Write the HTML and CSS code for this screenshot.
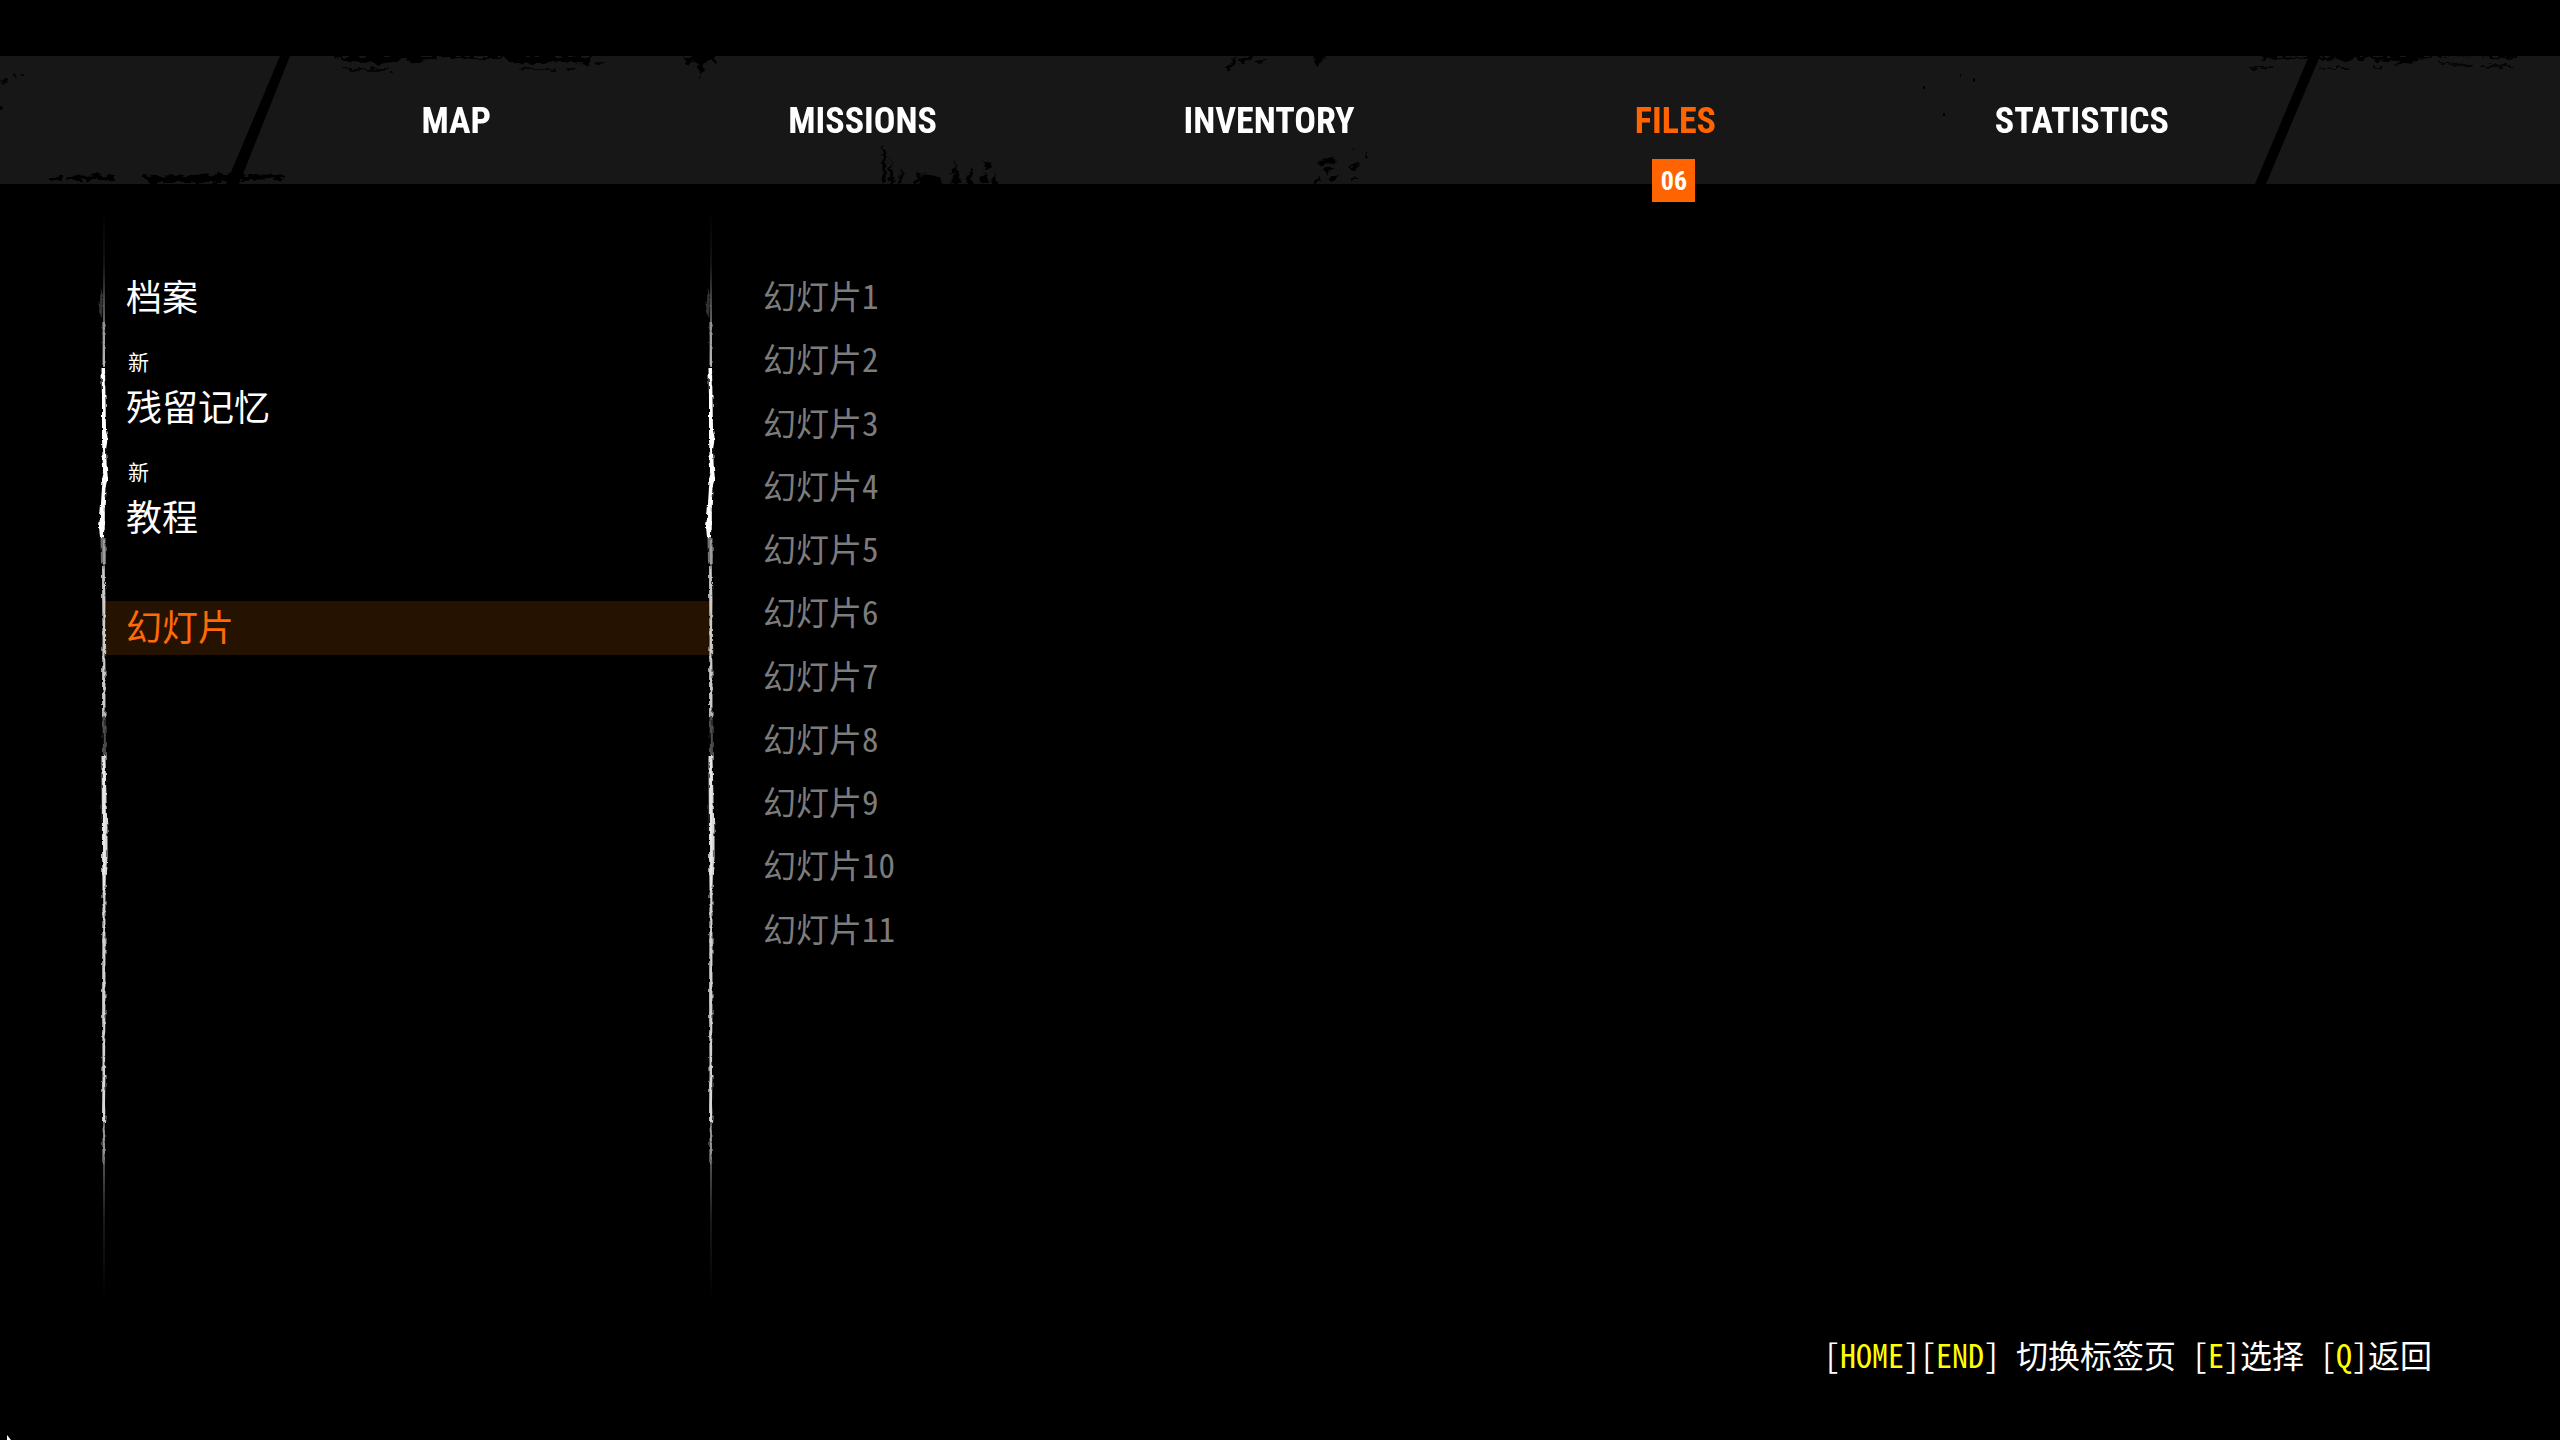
FILE: index.html
```
<!DOCTYPE html>
<html lang="zh-CN">
<head>
  <meta charset="UTF-8">
  <meta name="viewport" content="width=device-width, initial-scale=1.0">
  <title>Files</title>
  <link rel="stylesheet" href="styles.css">
</head>
<body>

<!-- shared shapes -->
<svg class="defs" aria-hidden="true">
  <defs>
    <filter id="rough" x="-50%" y="-5%" width="200%" height="110%">
      <feTurbulence type="fractalNoise" baseFrequency="0.3 0.15" numOctaves="2" seed="4" result="n"/>
      <feDisplacementMap in="SourceGraphic" in2="n" scale="4" xChannelSelector="R" yChannelSelector="G"/>
    </filter>
    <filter id="blot" x="-10%" y="-30%" width="120%" height="160%">
      <feTurbulence type="fractalNoise" baseFrequency="0.12 0.2" numOctaves="2" seed="9" result="n"/>
      <feDisplacementMap in="SourceGraphic" in2="n" scale="9" xChannelSelector="R" yChannelSelector="G"/>
    </filter>
    <linearGradient id="fadeTop" x1="0" y1="0" x2="0" y2="1">
      <stop offset="0" stop-color="#fff" stop-opacity="0"/>
      <stop offset="0.35" stop-color="#fff" stop-opacity="0.08"/>
      <stop offset="0.6" stop-color="#fff" stop-opacity="0.3"/>
      <stop offset="1" stop-color="#fff" stop-opacity="0.6"/>
    </linearGradient>
    <linearGradient id="fadeBottom" x1="0" y1="0" x2="0" y2="1">
      <stop offset="0" stop-color="#fff" stop-opacity="0.4"/>
      <stop offset="0.5" stop-color="#fff" stop-opacity="0.1"/>
      <stop offset="1" stop-color="#fff" stop-opacity="0"/>
    </linearGradient>
    <symbol id="edge" viewBox="0 0 24 1120">
      <rect x="11" y="10" width="2" height="157" fill="url(#fadeTop)"/>
      <rect x="11" y="940" width="2" height="160" fill="url(#fadeBottom)"/>
      <g filter="url(#rough)" fill="#fff">
        <path opacity="0.2" d="M9 88 L11 96 L10 118 L7 112 Z"/>
        <path opacity="0.3" d="M10.500 122 L13 122 L13 166 L10 166 Z"/>
        <path d="M9.500 168 L13 168 L14 230 L15.500 238 L14 250 L15 270 L16 278 L13.500 288 L12.500 310 L12 338 L8 338 L7 326 L8.500 310 L10 288 L11 270 L10 240 L10 200 Z"/>
        <path opacity="0.45" d="M8.500 338 L13.500 338 L14 364 L9 362 Z"/>
        <path opacity="0.7" d="M10 366 L12.500 366 L13.500 400 L13 440 L13.500 470 L13.500 516 L10 516 L10 480 L10.500 440 L10 390 Z"/>
        <path opacity="0.3" d="M10.500 516 L13.500 516 L14 556 L11 556 Z"/>
        <path opacity="0.85" d="M9.500 556 L13.500 556 L14.500 600 L15.500 630 L15.500 658 L14 670 L13.500 690 L10.500 690 L10 640 Z"/>
        <path opacity="0.7" d="M10.500 690 L13.500 690 L13.500 760 L13.500 800 L13 874 L10.500 874 L10 800 Z"/>
        <path opacity="0.75" d="M10.500 874 L13.500 874 L13 904 L13.500 916 L13 922 L10 922 L10 908 Z"/>
        <path opacity="0.35" d="M10.500 926 L12.500 926 L13 952 L12 966 L10 960 Z"/>
      </g>
      <rect x="11" y="170" width="2" height="160" fill="#fff" opacity="0.7"/>
      <rect x="11" y="340" width="2" height="170" fill="#fff" opacity="0.3"/>
      <rect x="11" y="560" width="2" height="380" fill="#fff" opacity="0.4"/>
    </symbol>
  </defs>
</svg>

<header class="topbar">
  <svg class="topbar-art" viewBox="0 0 2560 128" preserveAspectRatio="none" aria-hidden="true">
    <polygon points="280,0 290,0 239,128 226,128"/>
    <polygon points="2309,0 2320,0 2266,128 2255,128"/>
    <g filter="url(#blot)">
      <path d="M335 0 L425 0 L510 0 L592 0 L588 8 L560 5 L540 8 L512 7 L505 2 L430 2 L420 6 L400 4 L380 8 L350 6 Z"/>
      <path opacity="0.7" d="M342 12 H390 V15 H342 Z M518 12 H555 V14 H518 Z M565 12 H575 V14 H565 Z M596 6 H604 V8 H596 Z"/>
      <path d="M684 0 H716 L714 10 L710 4 L704 8 L701 22 L697 8 L692 4 L688 8 Z"/>
      <path opacity="0.8" d="M0 26 L6 22 L8 24 L2 29 Z M12 20 L15 17 L16 22 Z M20 18 L25 17 L23 21 Z M0 50 L2 50 V54 H0 Z"/>
      <path d="M50 120 H62 V124 H50 Z M66 120 L114 119 V124 H68 Z M142 120 L230 118 L284 119 V123 L240 124 L210 127 L150 127 Z"/>
      <path d="M882 128 L883 88 L886 100 L887 128 Z M890 128 L891 100 L894 128 Z M899 128 L900 112 L904 128 Z M914 128 L917 118 L940 120 L942 128 Z M950 128 L956 104 L960 128 Z M966 128 L970 112 L974 128 Z M982 104 L992 108 L988 114 Z M980 128 L984 116 L988 128 Z M990 128 L996 116 L997 128 Z"/>
      <path d="M1226 14 L1232 4 L1238 2 L1236 8 L1230 14 Z M1240 3 L1252 0 L1250 4 L1242 8 Z M1254 5 L1268 3 L1258 8 Z M1313 0 L1326 0 L1322 6 L1318 14 Z"/>
      <path d="M1316 106 L1334 102 L1336 106 L1322 109 Z M1322 112 L1334 112 L1328 118 Z M1348 110 L1360 107 L1354 114 Z M1312 128 L1318 121 L1322 124 Z M1328 121 L1338 121 L1332 127 Z M1350 122 L1358 121 L1352 126 Z M1352 92 L1356 92 L1354 96 Z M1364 96 L1368 96 L1366 102 Z"/>
      <path d="M2258 0 L2520 0 L2516 3 L2490 2 L2480 0 L2430 1 L2410 7 L2392 9 L2400 4 L2376 5 L2368 2 L2350 5 L2324 4 L2300 1 L2262 3 Z"/>
      <path opacity="0.7" d="M2250 11 H2274 V13 H2250 Z M2320 11 H2350 V13 H2320 Z M2374 10 H2382 V12 H2374 Z M2440 5 L2472 9 L2470 12 L2440 7 Z M2482 9 H2514 V11 H2482 Z"/>
    </g>
    <path d="M1923 30 h2 v3 h-2 Z M1960 18 h1 v3 h-1 Z M1973 22 h2 v4 h-2 Z M1943 57 h2 v3 h-2 Z"/>
  </svg>
  <nav class="tabs">
    <a href="#map">MAP</a>
    <a href="#missions">MISSIONS</a>
    <a href="#inventory">INVENTORY</a>
    <a href="#files" class="active" aria-current="page">FILES<span class="badge">06</span></a>
    <a href="#statistics">STATISTICS</a>
  </nav>
</header>

<main class="files">
  <aside class="sidebar">
    <ul class="categories">
      <li><button type="button">档案</button></li>
      <li><span class="new">新</span><button type="button">残留记忆</button></li>
      <li><span class="new">新</span><button type="button">教程</button></li>
      <li><button type="button" class="selected">幻灯片</button></li>
    </ul>
    <svg class="edge edge-left" aria-hidden="true"><use href="#edge"/></svg>
    <svg class="edge edge-right" aria-hidden="true"><use href="#edge"/></svg>
  </aside>

  <ul class="slides">
    <li><button type="button">幻灯片1</button></li>
    <li><button type="button">幻灯片2</button></li>
    <li><button type="button">幻灯片3</button></li>
    <li><button type="button">幻灯片4</button></li>
    <li><button type="button">幻灯片5</button></li>
    <li><button type="button">幻灯片6</button></li>
    <li><button type="button">幻灯片7</button></li>
    <li><button type="button">幻灯片8</button></li>
    <li><button type="button">幻灯片9</button></li>
    <li><button type="button">幻灯片10</button></li>
    <li><button type="button">幻灯片11</button></li>
  </ul>
</main>

<footer class="hints">
  [<kbd>HOME</kbd>][<kbd>END</kbd>] 切换标签页 [<kbd>E</kbd>]选择 [<kbd>Q</kbd>]返回
</footer>

<svg class="cursor" viewBox="0 0 6 5" aria-hidden="true"><path d="M1 0 L5 5 H1 Z"/></svg>

</body>
</html>
```
FILE: styles.css
```
* {
  box-sizing: border-box;
}

body {
  margin: 0;
  min-height: 100vh;
  display: flex;
  flex-direction: column;
  background: #000;
  color: #fff;
  font-family: "Noto Sans Mono CJK SC", "Noto Sans CJK SC", sans-serif;
}

ul {
  list-style: none;
  margin: 0;
  padding: 0;
}

button {
  display: block;
  width: 100%;
  border: none;
  background: none;
  color: inherit;
  font: inherit;
  text-align: left;
  cursor: pointer;
}

.defs {
  position: absolute;
  width: 0;
  height: 0;
}

/* top bar */
.topbar {
  position: relative;
  height: 128px;
  margin-top: 56px;
  background: #171717;
}

.topbar-art {
  position: absolute;
  inset: 0;
  width: 100%;
  height: 100%;
}

.tabs {
  position: relative;
  display: grid;
  grid-template-columns: repeat(5, 1fr);
  height: 100%;
  padding: 0 275px 0 253px;
}

.tabs a {
  position: relative;
  color: #fff;
  font-family: "Liberation Sans Narrow", "Roboto Condensed", "Open Sans Condensed", Roboto, sans-serif;
  font-size: 36px;
  font-weight: bold;
  line-height: 130px;
  text-align: center;
  text-decoration: none;
}

.tabs .active {
  color: #ff6400;
}

.badge {
  position: absolute;
  left: 50%;
  bottom: -16px;
  width: 43px;
  height: 43px;
  margin-left: -23px;
  background: #ff6400;
  color: #fff;
  font-size: 26px;
  line-height: 45px;
}

/* columns */
.files {
  display: grid;
  grid-template-columns: 607px 1fr;
  padding: 16px 104px 0;
}

.sidebar {
  position: relative;
  min-height: 1120px;
  padding-top: 15px;
}

.categories {
  font-size: 36px;
}

.categories li {
  position: relative;
  padding-top: 56px;
}

.categories button {
  height: 54px;
  padding: 0 22px 6px;
  line-height: 48px;
}

.categories .selected {
  background: #261200;
  color: #ff6a08;
}

.new {
  position: absolute;
  top: 19px;
  left: 24px;
  font-size: 21px;
  line-height: 34px;
}

.edge {
  position: absolute;
  top: 0;
  width: 24px;
  height: 1120px;
}

.edge-left {
  left: -12px;
}

.edge-right {
  right: -12px;
}

.slides {
  display: grid;
  grid-auto-rows: 1fr;
  align-self: start;
  height: 696px;
  margin-top: 64px;
  padding-left: 52px;
  color: #7c7c7c;
  font-size: 33px;
}

.slides button {
  padding: 0;
  line-height: 63px;
}

/* key hints */
.hints {
  margin-top: auto;
  padding: 0 128px 62px 0;
  font-size: 32px;
  line-height: 48px;
  text-align: right;
}

.hints kbd {
  color: #ff0;
  font: inherit;
}

.cursor {
  position: absolute;
  left: 6px;
  bottom: 0;
  width: 6px;
  height: 5px;
  fill: #fff;
}
```
